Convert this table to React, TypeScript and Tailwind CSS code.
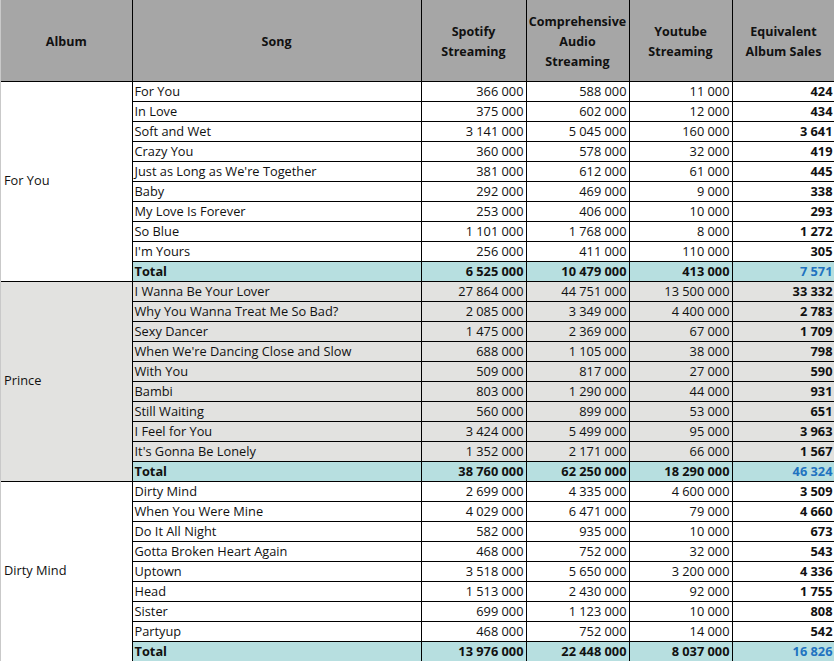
import React from "react";

type Row = [string, string, string, string, string];

const groups: { album: string; shade: string; rows: Row[]; total: Row }[] = [
  {
    album: "For You",
    shade: "bg-white",
    rows: [
      ["For You", "366 000", "588 000", "11 000", "424"],
      ["In Love", "375 000", "602 000", "12 000", "434"],
      ["Soft and Wet", "3 141 000", "5 045 000", "160 000", "3 641"],
      ["Crazy You", "360 000", "578 000", "32 000", "419"],
      ["Just as Long as We're Together", "381 000", "612 000", "61 000", "445"],
      ["Baby", "292 000", "469 000", "9 000", "338"],
      ["My Love Is Forever", "253 000", "406 000", "10 000", "293"],
      ["So Blue", "1 101 000", "1 768 000", "8 000", "1 272"],
      ["I'm Yours", "256 000", "411 000", "110 000", "305"],
    ],
    total: ["Total", "6 525 000", "10 479 000", "413 000", "7 571"],
  },
  {
    album: "Prince",
    shade: "bg-[#e2e2e0]",
    rows: [
      ["I Wanna Be Your Lover", "27 864 000", "44 751 000", "13 500 000", "33 332"],
      ["Why You Wanna Treat Me So Bad?", "2 085 000", "3 349 000", "4 400 000", "2 783"],
      ["Sexy Dancer", "1 475 000", "2 369 000", "67 000", "1 709"],
      ["When We're Dancing Close and Slow", "688 000", "1 105 000", "38 000", "798"],
      ["With You", "509 000", "817 000", "27 000", "590"],
      ["Bambi", "803 000", "1 290 000", "44 000", "931"],
      ["Still Waiting", "560 000", "899 000", "53 000", "651"],
      ["I Feel for You", "3 424 000", "5 499 000", "95 000", "3 963"],
      ["It's Gonna Be Lonely", "1 352 000", "2 171 000", "66 000", "1 567"],
    ],
    total: ["Total", "38 760 000", "62 250 000", "18 290 000", "46 324"],
  },
  {
    album: "Dirty Mind",
    shade: "bg-white",
    rows: [
      ["Dirty Mind", "2 699 000", "4 335 000", "4 600 000", "3 509"],
      ["When You Were Mine", "4 029 000", "6 471 000", "79 000", "4 660"],
      ["Do It All Night", "582 000", "935 000", "10 000", "673"],
      ["Gotta Broken Heart Again", "468 000", "752 000", "32 000", "543"],
      ["Uptown", "3 518 000", "5 650 000", "3 200 000", "4 336"],
      ["Head", "1 513 000", "2 430 000", "92 000", "1 755"],
      ["Sister", "699 000", "1 123 000", "10 000", "808"],
      ["Partyup", "468 000", "752 000", "14 000", "542"],
    ],
    total: ["Total", "13 976 000", "22 448 000", "8 037 000", "16 826"],
  },
];

const cell = "border border-black h-[20px] px-[2px] py-0 leading-[19px] whitespace-nowrap";

export default function App() {
  return (
    <div className="w-[834px] h-[661px] overflow-hidden bg-white border-l border-[#c9c9c9]">
      <table
        className="table-fixed border-collapse w-[834px] text-[12.8px] text-[#111]"
        style={{ fontFamily: '"Open Sans", "Liberation Sans", sans-serif' }}
      >
        <colgroup>
          <col className="w-[131px]" />
          <col className="w-[289px]" />
          <col className="w-[105px]" />
          <col className="w-[103px]" />
          <col className="w-[103px]" />
          <col className="w-[103px]" />
        </colgroup>
        <thead>
          <tr className="bg-[#a6a6a6] h-[81px] font-bold text-center leading-[20px] text-[12.5px]">
            <th className="border border-black border-t-0 border-l-0 pt-[3px]">Album</th>
            <th className="border border-black border-t-0 pt-[3px]">Song</th>
            <th className="border border-black border-t-0 pt-[3px]">
              Spotify
              <br />
              Streaming
            </th>
            <th className="border border-black border-t-0 pt-[3px]">
              Comprehensive
              <br />
              Audio
              <br />
              Streaming
            </th>
            <th className="border border-black border-t-0 pt-[3px]">
              Youtube
              <br />
              Streaming
            </th>
            <th className="border border-black border-t-0 pt-[3px]">
              Equivalent
              <br />
              Album Sales
            </th>
          </tr>
        </thead>
        <tbody>
          {groups.map((g) => (
            <React.Fragment key={g.album}>
              {g.rows.map((r, i) => (
                <tr key={r[0]} className={g.shade}>
                  {i === 0 && (
                    <td
                      rowSpan={g.rows.length + 1}
                      className="border border-black border-l-0 px-[3px] align-middle"
                    >
                      {g.album}
                    </td>
                  )}
                  <td className={cell}>{r[0]}</td>
                  <td className={cell + " text-right"}>{r[1]}</td>
                  <td className={cell + " text-right"}>{r[2]}</td>
                  <td className={cell + " text-right"}>{r[3]}</td>
                  <td className={cell + " text-right font-bold"}>{r[4]}</td>
                </tr>
              ))}
              <tr className="bg-[#b7dfe0] font-bold">
                <td className={cell}>{g.total[0]}</td>
                <td className={cell + " text-right"}>{g.total[1]}</td>
                <td className={cell + " text-right"}>{g.total[2]}</td>
                <td className={cell + " text-right"}>{g.total[3]}</td>
                <td className={cell + " text-right text-[#1f73c0]"}>{g.total[4]}</td>
              </tr>
            </React.Fragment>
          ))}
        </tbody>
      </table>
    </div>
  );
}
